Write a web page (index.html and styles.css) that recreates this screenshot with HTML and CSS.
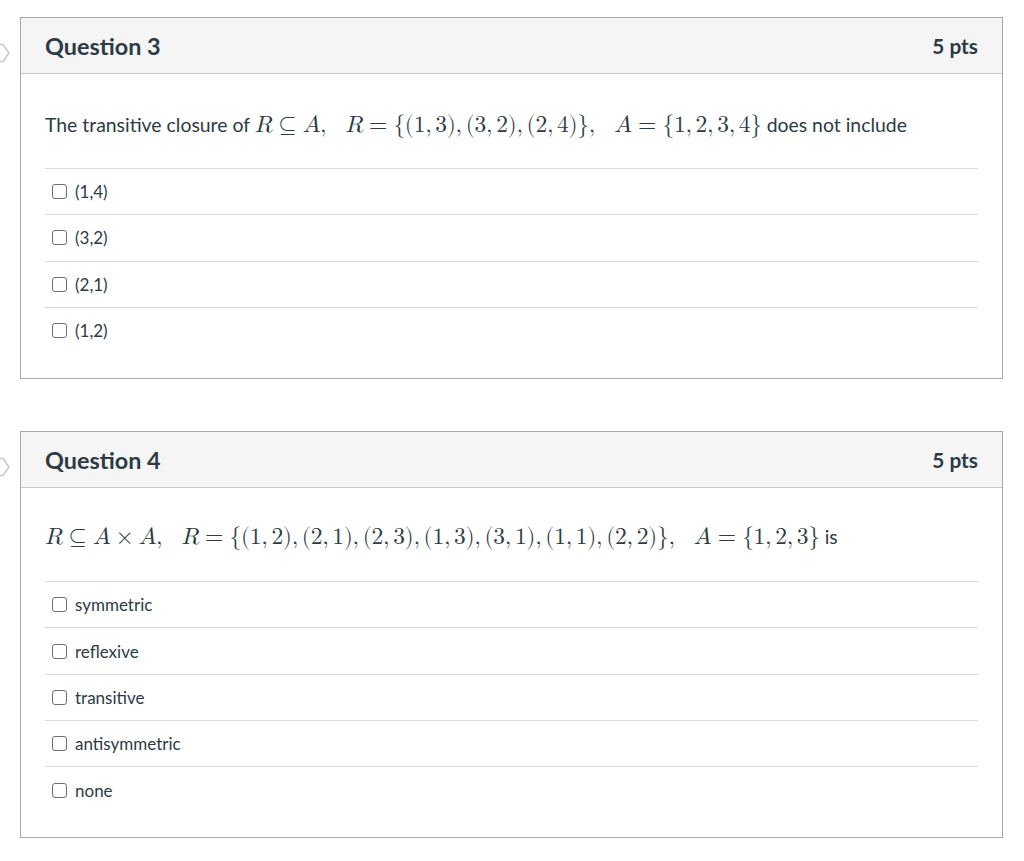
FILE: index.html
```html
<!DOCTYPE html>
<html>
<head>
<meta charset="utf-8">
<link rel="stylesheet" href="styles.css">
</head>
<body>
<div class="page">
  <div class="qrow">
    <div class="flag"><svg width="12" height="20" viewBox="0 0 12 20"><polyline points="-2,1.5 3,1.5 9,10 3,18.5 -2,18.5" fill="none" stroke="#c8c8c8" stroke-width="1.5"/></svg></div>
    <div class="card">
      <div class="card-head">
        <h2 class="q-title">Question 3</h2>
        <span class="pts">5 pts</span>
      </div>
      <div class="card-body">
        <div class="q-text">The transitive closure of <span class="math"><i>R</i><span class="rel">⊆</span><i>A</i><span class="punct">,</span><span class="quad"></span><i>R</i><span class="rel">=</span>{(1<span class="punct">,</span>3)<span class="punct">,</span>(3<span class="punct">,</span>2)<span class="punct">,</span>(2<span class="punct">,</span>4)}<span class="punct">,</span><span class="quad"></span><i>A</i><span class="rel">=</span>{1<span class="punct">,</span>2<span class="punct">,</span>3<span class="punct">,</span>4}</span> does not include</div>
        <div class="answers">
          <label class="answer"><span class="box"></span><span class="lbl">(1,4)</span></label>
          <label class="answer"><span class="box"></span><span class="lbl">(3,2)</span></label>
          <label class="answer"><span class="box"></span><span class="lbl">(2,1)</span></label>
          <label class="answer"><span class="box"></span><span class="lbl">(1,2)</span></label>
        </div>
      </div>
    </div>
  </div>

  <div class="qrow">
    <div class="flag"><svg width="12" height="20" viewBox="0 0 12 20"><polyline points="-2,1.5 3,1.5 9,10 3,18.5 -2,18.5" fill="none" stroke="#c8c8c8" stroke-width="1.5"/></svg></div>
    <div class="card">
      <div class="card-head">
        <h2 class="q-title">Question 4</h2>
        <span class="pts">5 pts</span>
      </div>
      <div class="card-body body-q4">
        <div class="q-text q4"><span class="math"><i>R</i><span class="rel">⊆</span><i>A</i><span class="bin">×</span><i>A</i><span class="punct">,</span><span class="quad"></span><i>R</i><span class="rel">=</span>{(1<span class="punct">,</span>2)<span class="punct">,</span>(2<span class="punct">,</span>1)<span class="punct">,</span>(2<span class="punct">,</span>3)<span class="punct">,</span>(1<span class="punct">,</span>3)<span class="punct">,</span>(3<span class="punct">,</span>1)<span class="punct">,</span>(1<span class="punct">,</span>1)<span class="punct">,</span>(2<span class="punct">,</span>2)}<span class="punct">,</span><span class="quad"></span><i>A</i><span class="rel">=</span>{1<span class="punct">,</span>2<span class="punct">,</span>3}</span> is</div>
        <div class="answers">
          <label class="answer"><span class="box"></span><span class="lbl">symmetric</span></label>
          <label class="answer"><span class="box"></span><span class="lbl">reflexive</span></label>
          <label class="answer"><span class="box"></span><span class="lbl">transitive</span></label>
          <label class="answer"><span class="box"></span><span class="lbl">antisymmetric</span></label>
          <label class="answer"><span class="box"></span><span class="lbl">none</span></label>
        </div>
      </div>
    </div>
  </div>
</div>
</body>
</html>
```

FILE: styles.css
```css
* { box-sizing: border-box; }
html, body { margin: 0; padding: 0; background: #fff; }
body {
  font-family: Lato, "Liberation Sans", sans-serif;
  color: #2d3b45;
  font-size: 16px;
}
.page {
  padding: 17px 21px 0 0;
  display: flex;
  flex-direction: column;
  gap: 52px;
}
.qrow {
  display: flex;
  align-items: flex-start;
}
.flag {
  width: 20px;
  flex: none;
  padding-top: 26px;
  display: flex;
}
.card {
  flex: 1;
  border: 1px solid #a8a8a8;
}
.card-head {
  height: 56px;
  background: #f5f5f5;
  border-bottom: 1px solid #c7c7c7;
  display: flex;
  align-items: center;
  justify-content: space-between;
  padding: 0 24px;
}
.q-title {
  margin: 0;
  font-size: 23.4px;
  font-weight: 700;
  color: #2d3b45;
}
.pts {
  font-size: 20.8px;
  font-weight: 700;
  color: #2d3b45;
}
.card-body {
  padding: 0 24px 25px 24px;
}
.body-q4 { padding-bottom: 24px; }
.q-text {
  font-size: 19.4px;
  line-height: 32px;
  padding: 35px 0 27px 0;
  white-space: nowrap;
}
.q4 { padding: 33px 0 28px 0; }
.math {
  font-family: "Latin Modern Math", "DejaVu Serif", "Liberation Serif", serif;
  font-size: 23.5px;
  letter-spacing: -0.3px;
}
.math i { font-style: italic; }
.rel { margin: 0 0.2778em; }
.bin { margin: 0 0.2222em; }
.punct { margin-right: 0.1667em; }
.quad { display: inline-block; width: 0.65em; }
.answers { display: flex; flex-direction: column; }
.answer {
  height: 46.3px;
  border-top: 1px solid #d9d9d9;
  display: flex;
  align-items: center;
  padding-left: 7px;
  font-size: 17px;
}
.box {
  width: 15px;
  height: 15px;
  border: 1.5px solid #6f6f6f;
  border-radius: 3px;
  margin-right: 8px;
  flex: none;
}
.lbl { color: #2d3b45; }
```
